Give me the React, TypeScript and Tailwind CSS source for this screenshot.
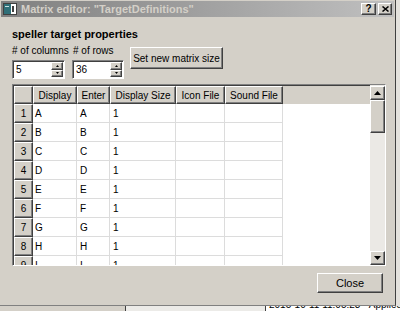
import React from 'react';

const raised =
  'border border-t-white border-l-white border-r-[#404040] border-b-[#404040] shadow-[inset_-1px_-1px_#808080] bg-[#d4d0c8]';
const sunken =
  'border border-t-[#808080] border-l-[#808080] border-r-white border-b-white shadow-[inset_1px_1px_#404040]';

const columns = [
  { label: 'Display', w: 'w-[44px]' },
  { label: 'Enter', w: 'w-[33px]' },
  { label: 'Display Size', w: 'w-[66px]' },
  { label: 'Icon File', w: 'w-[49px]' },
  { label: 'Sound File', w: 'w-[58px]' },
];

const rows = ['A', 'B', 'C', 'D', 'E', 'F', 'G', 'H', 'I'];

function Arrow({ down = false }: { down?: boolean }) {
  return (
    <svg width="7" height="4" viewBox="0 0 7 4" className={down ? 'rotate-180' : ''}>
      <path d="M3.5 0 L7 4 L0 4 Z" fill="#000" />
    </svg>
  );
}

function SpinBox({ value }: { value: string }) {
  return (
    <div className={`${sunken} h-[19px] bg-white flex items-center pl-[3px] pr-[1px]`}>
      <span className="flex-1 text-black">{value}</span>
      <div className="flex flex-col w-[12px] h-[15px]">
        <div className={`${raised} flex-1 flex items-center justify-center`}>
          <svg width="3" height="2" viewBox="0 0 3 2"><path d="M1.5 0 L3 2 L0 2Z" fill="#000" /></svg>
        </div>
        <div className={`${raised} flex-1 flex items-center justify-center`}>
          <svg width="3" height="2" viewBox="0 0 3 2"><path d="M0 0 L3 0 L1.5 2Z" fill="#000" /></svg>
        </div>
      </div>
    </div>
  );
}

export default function App() {
  return (
    <div className="w-[400px] h-[311px] bg-[#d4d0c8] overflow-hidden flex flex-col font-['Liberation_Sans',Arial,sans-serif] text-[10px] text-black">
      <div className="flex h-[306px]">
        <div className="w-[396px] flex flex-col border-b border-[#808080] border-r border-r-[#404040] pl-[1px] pt-[1px]">
          {/* Title bar */}
          <div className="h-[16px] mr-[1px] flex items-center bg-gradient-to-r from-[#808080] to-[#c0c0c0] pl-[2px] pr-[2px]">
            <svg width="14" height="12" viewBox="0 0 14 12" className="mr-[4px]">
              <rect x="0.5" y="0.5" width="13" height="11" fill="#fff" stroke="#404040" />
              <rect x="1" y="1" width="7" height="10" fill="#2f6f78" />
              <rect x="9" y="3" width="2" height="6" fill="#404040" />
              <rect x="2" y="3" width="4" height="1" fill="#c8e0e0" />
            </svg>
            <span className="font-bold text-[11px] text-[#d4d0c8] flex-1">Matrix editor: "TargetDefinitions"</span>
            <div className={`${raised} w-[15px] h-[12px] flex items-center justify-center text-[10px] font-bold leading-none`}>?</div>
            <div className={`${raised} w-[14px] h-[12px] ml-[2px] flex items-center justify-center`}>
              <svg width="7" height="6" viewBox="0 0 7 6"><path d="M0.5 0.5 L6.5 5.5 M6.5 0.5 L0.5 5.5" stroke="#000" strokeWidth="1.5" /></svg>
            </div>
          </div>

          <div className="flex flex-col pl-[11px] pr-[11px]">
            <div className="mt-[10px] font-bold text-[11px] leading-[14px]">speller target properties</div>

            <div className="flex">
              <div className="grid grid-cols-[53px_52px] gap-x-[7px]">
                <div className="mt-[3px] leading-[14px] whitespace-nowrap">&#35; of columns</div>
                <div className="mt-[3px] leading-[14px] whitespace-nowrap pl-[1px]">&#35; of rows</div>
                <div className="mt-[2px]"><SpinBox value="5" /></div>
                <div className="mt-[2px]"><SpinBox value="36" /></div>
              </div>
              <div className={`${raised} ml-[6px] mt-[6px] w-[93px] h-[22px] flex items-center justify-center`}>
                Set new matrix size
              </div>
            </div>

            {/* Table */}
            <div className={`${sunken} mt-[5px] h-[182px] w-[374px] flex overflow-hidden`}>
              <div className="flex-1 flex flex-col overflow-hidden pl-[1px] pt-[1px]">
                <div className="flex h-[18px] shrink-0">
                  <div className={`${raised} w-[19px]`} />
                  {columns.map((c) => (
                    <div key={c.label} className={`${raised} ${c.w} flex items-center justify-center whitespace-nowrap`}>
                      {c.label}
                    </div>
                  ))}
                  <div className="flex-1" />
                </div>
                <div className="flex-1 flex flex-col bg-white overflow-hidden">
                  {rows.map((r, i) => (
                    <div key={r} className="flex h-[19px] shrink-0">
                      <div className={`${raised} w-[19px] flex items-center justify-center`}>{i + 1}</div>
                      <div className="w-[44px] border-r border-b border-[#dcdcdc] pl-[2px] flex items-center">{r}</div>
                      <div className="w-[33px] border-r border-b border-[#dcdcdc] pl-[3px] flex items-center">{r}</div>
                      <div className="w-[66px] border-r border-b border-[#dcdcdc] pl-[3px] flex items-center">1</div>
                      <div className="w-[49px] border-r border-b border-[#dcdcdc]" />
                      <div className="w-[58px] border-r border-b border-[#dcdcdc]" />
                      <div className="flex-1" />
                    </div>
                  ))}
                </div>
              </div>
              {/* Scrollbar */}
              <div className="w-[15px] flex flex-col bg-[#ebe9e5] pt-[1px]">
                <div className={`${raised} h-[14px] flex items-center justify-center`}>
                  <Arrow />
                </div>
                <div className={`${raised} h-[33px]`} />
                <div className="flex-1" />
                <div className={`${raised} h-[14px] flex items-center justify-center`}>
                  <Arrow down />
                </div>
              </div>
            </div>

            <div className="flex justify-end mt-[7px] pr-[1px]">
              <div className={`${raised} w-[66px] h-[20px] flex items-center justify-center text-[11px]`}>Close</div>
            </div>
          </div>
        </div>
        <div className="flex-1 bg-[#e4e2dd]" />
      </div>

      {/* Window behind */}
      <div className="flex flex-1 overflow-hidden">
        <div className="w-[125px] bg-[#d4d0c8]" />
        <div className="w-[140px] border-l border-[#404040] bg-[#ecebe8]" />
        <div className="flex-1 border-l border-[#404040] bg-white overflow-hidden pl-[3px]">
          <div className="-mt-[6px] leading-[10px] whitespace-nowrap text-[10px]">2015-10-11 11:05:23 - Applied</div>
        </div>
      </div>
    </div>
  );
}
